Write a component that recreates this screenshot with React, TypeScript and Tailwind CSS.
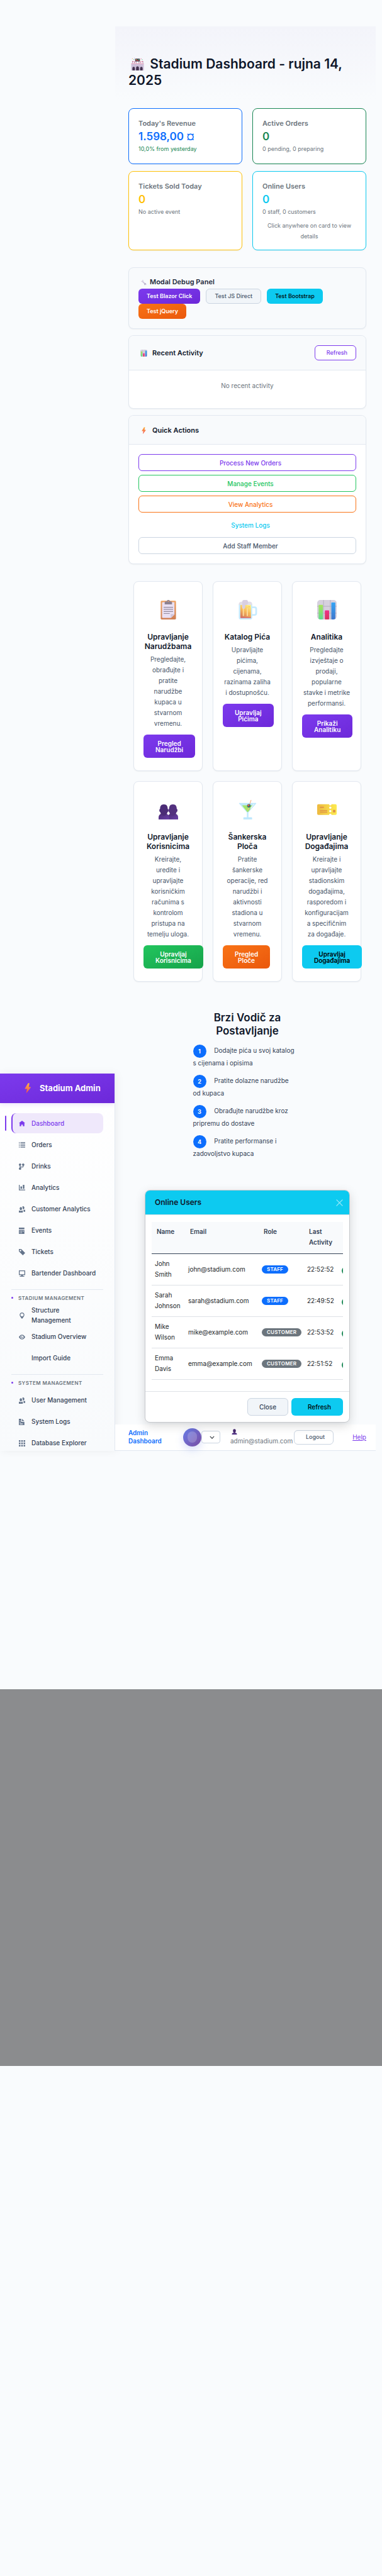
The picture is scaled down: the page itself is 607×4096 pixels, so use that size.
import React from "react";

const OI: Record<string, string> = {
  home: "M4 0l-4 3h1v4h2v-2h2v2h2v-4.03l1 .03-4-3z",
  list: "M0 0v1h1v-1h-1zm2 0v1h6v-1h-6zm-2 2v1h1v-1h-1zm2 0v1h6v-1h-6zm-2 2v1h1v-1h-1zm2 0v1h6v-1h-6zm-2 2v1h1v-1h-1zm2 0v1h6v-1h-6z",
  fork: "M1.5 0c-.83 0-1.5.67-1.5 1.5 0 .66.41 1.2 1 1.41v2.19c-.59.2-1 .75-1 1.41 0 .83.67 1.5 1.5 1.5s1.5-.67 1.5-1.5c0-.6-.34-1.1-.84-1.35.09-.09.21-.16.34-.16h2c.82 0 1.5-.68 1.5-1.5v-.59c.59-.2 1-.75 1-1.41 0-.83-.67-1.5-1.5-1.5s-1.5.67-1.5 1.5c0 .66.41 1.2 1 1.41v.59c0 .28-.22.5-.5.5h-2c-.17 0-.35.04-.5.09v-1.19c.59-.2 1-.75 1-1.41 0-.83-.67-1.5-1.5-1.5z",
  bars: "M0 0v7h8v-1h-7v-6h-1zm5 0v5h2v-5h-2zm-3 2v3h2v-3h-2z",
  people: "M5.5 0c-.51 0-.95.35-1.22.88.45.54.72 1.28.72 2.13 0 .29-.03.55-.09.81.19.11.38.19.59.19.83 0 1.5-.9 1.5-2s-.67-2-1.5-2zm-3 1c-.83 0-1.5.9-1.5 2s.67 2 1.5 2 1.5-.9 1.5-2-.67-2-1.5-2zm4.75 3.16c-.43.51-1.02.82-1.69.84.27.38.44.84.44 1.34v.66h2v-1.66c0-.52-.31-.97-.75-1.19zm-6.5 1c-.44.22-.75.67-.75 1.19v1.66h5v-1.66c0-.52-.31-.97-.75-1.19-.45.53-1.06.84-1.75.84s-1.3-.32-1.75-.84z",
  calendar: "M0 0v2h7v-2h-7zm0 3v4.91c0 .05.04.09.09.09h6.81c.05 0 .09-.04.09-.09v-4.91h-7zm1 1h1v1h-1v-1zm2 0h1v1h-1v-1zm2 0h1v1h-1v-1zm-4 2h1v1h-1v-1zm2 0h1v1h-1v-1z",
  tag: "M0 0v3l5 5 3-3-5-5h-3zm2 1c.55 0 1 .45 1 1s-.45 1-1 1-1-.45-1-1 .45-1 1-1z",
  monitor: "M.34 0a.5.5 0 0 0-.34.5v5a.5.5 0 0 0 .5.5h2.5v1h-1c-.55 0-1 .45-1 1h6c0-.55-.45-1-1-1h-1v-1h2.5a.5.5 0 0 0 .5-.5v-5a.5.5 0 0 0-.5-.5h-7a.5.5 0 0 0-.16 0zm.66 1h6v4h-6v-4z",
  marker: "M4 0c-1.66 0-3 1.34-3 3 0 2 3 5 3 5s3-3 3-5c0-1.66-1.34-3-3-3zm0 1c1.11 0 2 .9 2 2 0 1.11-.89 2-2 2-1.1 0-2-.89-2-2 0-1.1.9-2 2-2z",
  eye: "M4.03 1c-2.53 0-4.03 3-4.03 3s1.5 3 4.03 3c2.47 0 3.97-3 3.97-3s-1.5-3-3.97-3zm-.03 1c1.11 0 2 .9 2 2 0 1.11-.89 2-2 2-1.1 0-2-.89-2-2 0-1.1.9-2 2-2zm0 1c-.55 0-1 .45-1 1s.45 1 1 1 1-.45 1-1c0-.1-.04-.19-.06-.28-.08.16-.24.28-.44.28-.28 0-.5-.22-.5-.5 0-.2.12-.36.28-.44-.09-.03-.18-.06-.28-.06z",
  doc: "M0 0v8h7v-4h-4v-4h-3zm4 0v3h3l-3-3zm-3 2h1v1h-1v-1zm0 2h1v1h-1v-1zm0 2h4v1h-4v-1z",
  grid: "M0 0h2v2h-2zM3 0h2v2h-2zM6 0h2v2h-2zM0 3h2v2h-2zM3 3h2v2h-2zM6 3h2v2h-2zM0 6h2v2h-2zM3 6h2v2h-2zM6 6h2v2h-2z",
};

type ArtProps = { className?: string };

const Stadium = ({ className }: ArtProps) => (
  <svg viewBox="0 0 32 32" className={className} aria-hidden="true">
    <g fill="#e0457b">
      <path d="M3 8l4 1.5L3 11zM8 9l4 1.5L8 12zM22 9l4 1.5-4 1.5zM27 8l4 1.5-4 1.5z" />
    </g>
    <g fill="#8b7f9c">
      <rect x="2.4" y="8" width=".8" height="7" />
      <rect x="7.4" y="9" width=".8" height="6" />
      <rect x="21.6" y="9" width=".8" height="6" />
      <rect x="29.4" y="8" width=".8" height="7" />
      <rect x="12" y="8" width="1" height="7" />
      <rect x="19" y="8" width="1" height="7" />
    </g>
    <rect x="10" y="2" width="12" height="7" rx="1" fill="#453c52" />
    <rect x="11.5" y="3.5" width="3" height="2" fill="#e89b3a" />
    <rect x="17.5" y="3.5" width="3" height="2" fill="#4bb36a" />
    <rect x="13" y="6.2" width="6" height="1.6" fill="#d84f4f" />
    <g>
      <circle cx="3" cy="2" r=".9" fill="#f2a33a" />
      <circle cx="7" cy="4" r=".9" fill="#3aa76d" />
      <circle cx="25" cy="2" r=".9" fill="#e0457b" />
      <circle cx="28" cy="4.5" r=".9" fill="#3aa76d" />
      <circle cx="8" cy="1" r=".7" fill="#6a5acd" />
      <circle cx="24" cy="5.5" r=".7" fill="#f2a33a" />
    </g>
    <path d="M0 14h32v3H0z" fill="#e9dff0" />
    <path d="M0 16h32v16H0z" fill="#cdbfd9" />
    <path d="M0 14h32v1.2H0z" fill="#e07a9b" />
    <g fill="#43324f">
      <path d="M3 32v-6a3.2 3.2 0 0 1 6.4 0v6zM12.4 32v-7a3.6 3.6 0 0 1 7.2 0v7zM22.6 32v-6a3.2 3.2 0 0 1 6.4 0v6z" />
    </g>
  </svg>
);

const Wrench = ({ className }: ArtProps) => (
  <svg viewBox="0 0 32 32" className={className} aria-hidden="true">
    <path d="M10 10L25 25" stroke="#cfc6dc" strokeWidth="6" strokeLinecap="round" />
    <path d="M3 9a7 7 0 0 0 10 5 7 7 0 0 0 2-9 7 7 0 0 0-5-3l2 5-4 4-5-2z" fill="#d8d0e3" />
    <path d="M20 22a6 6 0 0 1 9 0 6 6 0 0 1 1 6l-4-2-3 1 1 4a6 6 0 0 1-4-9z" fill="#bdb2cd" />
  </svg>
);

const Chart = ({ className }: ArtProps) => (
  <svg viewBox="0 0 32 32" className={className} aria-hidden="true">
    <defs>
      <linearGradient id="cg" x1="0" y1="0" x2="0" y2="1"><stop stopColor="#a8e35c" /><stop offset="1" stopColor="#5fdc8e" /></linearGradient>
      <linearGradient id="cr" x1="0" y1="0" x2="0" y2="1"><stop stopColor="#ee3289" /><stop offset="1" stopColor="#d8345c" /></linearGradient>
      <linearGradient id="cb" x1="0" y1="0" x2="0" y2="1"><stop stopColor="#35a5f5" /><stop offset="1" stopColor="#3f76cc" /></linearGradient>
      <clipPath id="cc"><rect width="32" height="32" rx="5" /></clipPath>
    </defs>
    <g clipPath="url(#cc)">
      <rect width="32" height="32" fill="#d6d0de" />
      <path d="M0 10.4h32M0 21.6h32M10.4 0v32M21.6 0v32" stroke="#b5adc0" strokeWidth="1" />
      <rect x="2.4" y="8" width="7" height="24" rx="1" fill="url(#cg)" />
      <rect x="12.6" y="17" width="7" height="15" rx="1" fill="url(#cr)" />
      <rect x="23.2" y="4" width="6.6" height="28" rx="1" fill="url(#cb)" />
    </g>
  </svg>
);

const Bolt = ({ className }: ArtProps) => (
  <svg viewBox="0 0 32 32" className={className} aria-hidden="true">
    <defs>
      <linearGradient id="bo" x1="0" y1="0" x2="0" y2="1"><stop stopColor="#fcb545" /><stop offset="1" stopColor="#f4504e" /></linearGradient>
    </defs>
    <path d="M17 1L7 17.5c-.4.8 0 1.3.9 1.3H14l-2.5 11.5c-.2 1 .9 1.3 1.5.5L25.5 14.5c.5-.8.1-1.5-.8-1.5H19.5L21.5 2c.1-1-.5-1.3-1.2-1.3H18c-.5 0-.8.1-1 .3z" fill="url(#bo)" />
  </svg>
);

const Clipboard = ({ className }: ArtProps) => (
  <svg viewBox="0 0 32 32" className={className} aria-hidden="true">
    <defs>
      <linearGradient id="cl" x1="0" y1="0" x2="0" y2="1"><stop stopColor="#eda261" /><stop offset="1" stopColor="#cf7f55" /></linearGradient>
    </defs>
    <rect x="3.5" y="1.4" width="25" height="30.6" rx="1.5" fill="url(#cl)" />
    <path d="M6.5 3.5h19.5V24l-5.5 5.3H6.500a.8.8 0 0 1-.8-.8V4.300z" fill="#e9e0f3" />
    <path d="M20 29.300v-6h6z" fill="#cdc2d9" />
    <path d="M10 7.300V4.200c0-1 .8-1.800 1.800-1.800h1.700a2.500 2.500 0 0 1 5 0h1.700c1 0 1.800.8 1.800 1.800v3.100z" fill="#8d8291" />
    <circle cx="16" cy="2.3" r=".9" fill="#eda261" />
    <path d="M8.300 12h15.400M8.300 15.400h15.400M8.300 18.900h15.400M8.300 22.200h10" stroke="#958b9d" strokeWidth="1.2" />
  </svg>
);

const Beer = ({ className }: ArtProps) => (
  <svg viewBox="0 0 32 32" className={className} aria-hidden="true">
    <defs>
      <linearGradient id="be" x1=".8" y1="0" x2=".3" y2="1"><stop stopColor="#ffee82" /><stop offset=".5" stopColor="#f8bb5a" /><stop offset="1" stopColor="#d47a5c" /></linearGradient>
    </defs>
    <path d="M23 12h4.500a2.500 2.500 0 0 1 2.500 2.500v7.500a2.500 2.500 0 0 1-2.500 2.500H23" fill="none" stroke="#c6ebff" strokeWidth="2.8" />
    <path d="M1.500 7h22v22a3 3 0 0 1-3 3h-16a3 3 0 0 1-3-3z" fill="#c6ebff" />
    <path d="M4 8h17.500v20.500a1.300 1.300 0 0 1-1.300 1.300H5.300A1.300 1.300 0 0 1 4 28.500z" fill="url(#be)" />
    <path d="M4 29h17.500" stroke="#d56d82" strokeWidth="1.2" />
    <path d="M9 14v11.500M15.500 14v11.500" stroke="#fbd99a" strokeWidth="2" strokeLinecap="round" />
    <path d="M1.500 8V6.500A4 4 0 0 1 6.500 3 5.500 5.500 0 0 1 17 3a4.500 4.500 0 0 1 6.500 4v1h-12v4a2.300 2.300 0 0 1-4.600 0V8z" fill="#e3dfe8" />
    <path d="M7 4.500a5 5 0 0 1 10 0C17 7 15 8 12 8.500V12a2.300 2.300 0 0 1-4.600 0z" fill="#d9cfe2" />
    <circle cx="18.5" cy="11" r=".7" fill="#e7a14c" />
    <circle cx="18.5" cy="21.5" r=".7" fill="#e7a14c" />
  </svg>
);

const Person = ({ className }: ArtProps) => (
  <svg viewBox="0 0 32 32" className={className} aria-hidden="true">
    <path d="M2 32v-3c0-4 4-6.500 9-7h10c5 .5 9 3 9 7v3z" fill="#4f2f82" />
    <path d="M16 1c-5 0-7.500 3-7.500 8-1.500 0-1.500 4 0 4.300C9 19 12 23 16 23s7-4 7.500-9.700c1.500-.3 1.500-4.300 0-4.300C23.500 4 21 1 16 1z" fill="#46296f" />
  </svg>
);

const People = ({ className }: ArtProps) => (
  <svg viewBox="0 0 32 32" className={className} aria-hidden="true">
    <defs>
      <linearGradient id="pp" x1="0" y1="0" x2="1" y2="1"><stop stopColor="#4a2b74" /><stop offset="1" stopColor="#6a3fa8" /></linearGradient>
    </defs>
    <path d="M15 32v-3.500c0-4 3-6 6.500-6.500h4c3.800.5 6.500 2.700 6.500 6.500V32z" fill="url(#pp)" />
    <path d="M23.500 7.200c-4.500 0-6.300 2.800-6.300 7.500-1.700 0-1.500 5 .3 5 .6 3.500 3 6 6 6s5.400-2.500 6-6c1.800 0 2-5 .3-5 0-4.700-1.800-7.500-6.300-7.500z" fill="#53317f" />
    <path d="M0 32v-3.500C0 24.500 3 22.500 6.500 22h4c3.800.5 6.500 2.700 6.500 6.500V32z" fill="url(#pp)" />
    <path d="M8.700 7.200c-4.500 0-6.300 2.800-6.300 7.500-1.700 0-1.500 5 .3 5 .6 3.500 3 6 6 6s5.400-2.500 6-6c1.800 0 2-5 .3-5 0-4.700-1.800-7.500-6.300-7.500z" fill="#4b2c76" />
  </svg>
);

const Martini = ({ className }: ArtProps) => (
  <svg viewBox="0 0 32 32" className={className} aria-hidden="true">
    <path d="M2.500 5h27c.6 0 .8.500.5 1L17.300 20.500V28.500H22c.8 0 1.300.500 1.300 1.200V32H9v-2.300c0-.7.5-1.200 1.300-1.200h4.500V20.500L2 6c-.4-.5-.1-1 .5-1z" fill="#bfe8fd" />
    <path d="M6.800 8.800h18.500L16.800 19.500a1 1 0 0 1-1.500 0z" fill="#a3e56c" />
    <path d="M21.500.5l-5 15.500" stroke="#f5b58c" strokeWidth="1.2" strokeLinecap="round" />
    <circle cx="18" cy="9.5" r="2.9" fill="#3d6f7d" />
    <circle cx="17.4" cy="8.9" r="1.5" fill="#f0603f" />
    <path d="M26 7l-5 6.500" stroke="#eaf8ff" strokeWidth="1.3" strokeLinecap="round" />
  </svg>
);

const Ticket = ({ className }: ArtProps) => (
  <svg viewBox="0 0 32 32" className={className} aria-hidden="true">
    <defs>
      <linearGradient id="ti" x1="0" y1="0" x2="1" y2="0"><stop stopColor="#edb93f" /><stop offset="1" stopColor="#fdeb50" /></linearGradient>
    </defs>
    <path d="M2 7h17.500a2 2 0 0 0 4 0H30a2 2 0 0 1 2 2v13.500a2 2 0 0 1-2 2h-6.500a2 2 0 0 0-4 0H2a2 2 0 0 1-2-2V9a2 2 0 0 1 2-2z" fill="url(#ti)" />
    <circle cx="21.5" cy="12.6" r="1.8" fill="#fff" />
    <circle cx="21.5" cy="18.3" r="1.8" fill="#fff" />
    <path d="M4.500 11h6.500v1.800H4.500zM4.500 16.800h12v1.300h-12zM4.500 19.300h12v1.300h-12zM26 16.300h3.800v4H26z" fill="#dd8f47" />
  </svg>
);

const nav1: [string, string][] = [
  ["home", "Dashboard"],
  ["list", "Orders"],
  ["fork", "Drinks"],
  ["bars", "Analytics"],
  ["people", "Customer Analytics"],
  ["calendar", "Events"],
  ["tag", "Tickets"],
  ["monitor", "Bartender Dashboard"],
];
const nav2: [string, string][] = [
  ["marker", "Structure\nManagement"],
  ["eye", "Stadium Overview"],
  ["", "Import Guide"],
];
const nav3: [string, string][] = [
  ["people", "User Management"],
  ["doc", "System Logs"],
  ["grid", "Database Explorer"],
];

function NavItem({ icon, label, active }: { icon: string; label: string; active?: boolean }) {
  return (
    <li className="relative">
      {active && <span className="absolute -left-[10px] top-1 h-6 w-[2px] rounded bg-[#7c3aed]" />}
      <a
        href="#"
        className={
          "flex h-8 items-center gap-[10px] rounded-lg border-l-2 pl-[10px] text-[10px] leading-4 font-medium " +
          (active ? "border-[#7c3aed] bg-[#efe8fb] text-[#7c3aed]" : "border-transparent text-[#334155]")
        }
      >
        <svg viewBox="0 0 8 8" className={"mt-[2px] size-[10px] shrink-0 " + (active ? "fill-[#7c3aed]" : "fill-[#64748b]")} aria-hidden="true">
          <path d={OI[icon] || ""} />
        </svg>
        <span className="whitespace-pre">{label}</span>
      </a>
    </li>
  );
}

function NavGroup({ title, items }: { title: string; items: [string, string][] }) {
  return (
    <div className="mt-[10px] border-t border-[#e2e8f0] pt-2">
      <h2 className="flex items-center gap-2 text-[8px] leading-[10px] font-semibold tracking-wider text-[#6c757d] uppercase">
        <span className="size-[3px] rounded-full bg-[#7c3aed]" />
        {title}
      </h2>
      <ul className="mt-[6px] flex flex-col gap-[2px]">
        {items.map(([i, l]) => (
          <NavItem key={l} icon={i} label={l} />
        ))}
      </ul>
    </div>
  );
}

const card = "rounded-lg border border-[#e2e8f0] shadow-xs";

function Stat(props: { title: string; value: string; sub: string; border: string; color: string; subColor?: string; note?: string }) {
  return (
    <section className={"rounded-lg border bg-white px-[15px] pt-4 pb-[13px] shadow-xs " + props.border}>
      <h2 className="text-[11px] leading-[14px] font-semibold text-[#6c757d]">{props.title}</h2>
      <p className={"mt-1 text-[17px] leading-[20px] font-semibold " + props.color}>{props.value}</p>
      <p className={"text-[9px] leading-[20px] " + (props.subColor || "text-[#6c757d]")}>{props.sub}</p>
      {props.note && <p className="mt-[3px] text-center text-[9px] leading-[17px] text-[#6c757d]">{props.note}</p>}
    </section>
  );
}

const purple = "bg-linear-to-br from-[#7c3aed] to-[#6d28d9] text-white";
const green = "bg-linear-to-br from-[#22c55e] to-[#16a34a] text-white";
const orange = "bg-linear-to-br from-[#f97316] to-[#ea580c] text-white";
const cyan = "bg-[#0dcaf0] text-black";

const features = [
  { art: Clipboard, title: "Upravljanje Narudžbama", text: "Pregledajte,\nobrađujte i\npratite\nnarudžbe\nkupaca u\nstvarnom\nvremenu.", btn: "Pregled Narudžbi", tone: purple },
  { art: Beer, title: "Katalog Pića", text: "Upravljajte\npićima,\ncijenama,\nrazinama zaliha\ni dostupnošću.", btn: "Upravljaj Pićima", tone: purple },
  { art: Chart, title: "Analitika", text: "Pregledajte\nizvještaje o\nprodaji,\npopularne\nstavke i metrike\nperformansi.", btn: "Prikaži Analitiku", tone: purple },
  { art: People, title: "Upravljanje Korisnicima", text: "Kreirajte,\nuredite i\nupravljajte\nkorisničkim\nračunima s\nkontrolom\npristupa na\ntemelju uloga.", btn: "Upravljaj Korisnicima", tone: green },
  { art: Martini, title: "Šankerska Ploča", text: "Pratite\nšankerske\noperacije, red\nnarudžbi i\naktivnosti\nstadiona u\nstvarnom\nvremenu.", btn: "Pregled Ploče", tone: orange },
  { art: Ticket, title: "Upravljanje Događajima", text: "Kreirajte i\nupravljajte\nstadionskim\ndogađajima,\nrasporedom i\nkonfiguracijam\na specifičnim\nza događaje.", btn: "Upravljaj Događajima", tone: cyan },
];

const actions: [string, string][] = [
  ["Process New Orders", "border-[#7c3aed] text-[#7c3aed]"],
  ["Manage Events", "border-[#22c55e] text-[#22c55e]"],
  ["View Analytics", "border-[#f97316] text-[#f97316]"],
  ["System Logs", "border-transparent text-[#0dcaf0]"],
  ["Add Staff Member", "border-[#cbd5e1] text-[#475569]"],
];

const steps: [string, string][] = [
  ["Dodajte pića u svoj katalog", "s cijenama i opisima"],
  ["Pratite dolazne narudžbe", "od kupaca"],
  ["Obrađujte narudžbe kroz", "pripremu do dostave"],
  ["Pratite performanse i", "zadovoljstvo kupaca"],
];

const users = [
  ["John Smith", "john@stadium.com", "Staff", "22:52:52"],
  ["Sarah Johnson", "sarah@stadium.com", "Staff", "22:49:52"],
  ["Mike Wilson", "mike@example.com", "Customer", "22:53:52"],
  ["Emma Davis", "emma@example.com", "Customer", "22:51:52"],
];

const small = "h-6 rounded-md px-[13px] text-[9px] leading-3";

export default function App() {
  return (
    <div className="min-h-screen bg-[#f9fbfd] font-['Inter',sans-serif] text-[#1e293b]">
      <div className="flex items-end">
        <aside className="h-[600px] w-[183px] shrink-0 overflow-hidden border-r border-[#e2e8f0] bg-linear-to-b from-white to-[#f8fafc] shadow-[2px_0_13px_rgba(0,0,0,0.06)]">
          <div className="flex h-[47px] items-center gap-[11px] bg-linear-to-br from-[#7c3aed] to-[#6d28d9] pl-9 text-white shadow-[0_2px_7px_rgba(124,58,237,0.15)]">
            <Bolt className="size-4" />
            <span className="text-[13px] leading-5 font-bold">Stadium Admin</span>
          </div>
          <nav className="pt-4 pr-[18px] pl-[18px]">
            <ul className="flex flex-col gap-[2px]">
              {nav1.map(([i, l]) => (
                <NavItem key={l} icon={i} label={l} active={i === "home"} />
              ))}
            </ul>
            <NavGroup title="Stadium Management" items={nav2} />
            <NavGroup title="System Management" items={nav3} />
          </nav>
        </aside>

        <div className="mr-[10px] min-w-0 flex-1 pt-[42px]">
          <main>
            <header className="bg-linear-to-b from-[#f3f4fa] to-[#f9fbfd] pt-[47px] pr-[15px] pb-[19px] pl-[21px]">
              <h1 className="text-[21px] leading-[26px] font-semibold text-[#0f172a]">
                <Stadium className="mx-1 inline-block h-5 w-[21px] align-[-3px]" /> Stadium Dashboard - rujna 14, 2025
              </h1>
            </header>

            <div className="pt-3 pr-[15px] pl-[21px]">
              <div className="grid grid-cols-2 gap-x-4 gap-y-[11px]">
                <Stat title="Today's Revenue" value="1.598,00 ¤" sub="10,0% from yesterday" border="border-[#0d6efd]" color="text-[#0d6efd]" subColor="text-[#198754]" />
                <Stat title="Active Orders" value="0" sub="0 pending, 0 preparing" border="border-[#198754]" color="text-[#198754]" />
                <Stat title="Tickets Sold Today" value="0" sub="No active event" border="border-[#ffc107]" color="text-[#ffc107]" />
                <Stat title="Online Users" value="0" sub="0 staff, 0 customers" border="border-[#0dcaf0]" color="text-[#0dcaf0]" note="Click anywhere on card to view details" />
              </div>

              <section className={"mt-[27px] bg-[#f8fafc] px-[15px] pt-4 pb-[15px] " + card}>
                <h2 className="flex items-center gap-[5px] pl-[3px] text-[11px] leading-[13px] font-semibold">
                  <Wrench className="size-[10px]" /> Modal Debug Panel
                </h2>
                <div className="mt-1 flex flex-wrap gap-x-[9px]">
                  <button className={small + " font-semibold " + purple}>Test Blazor Click</button>
                  <button className={small + " border border-[#cbd5e1] bg-[#f1f5f9] font-medium text-[#475569]"}>Test JS Direct</button>
                  <button className={small + " font-medium " + cyan}>Test Bootstrap</button>
                  <button className={small + " font-semibold " + orange}>Test jQuery</button>
                </div>
              </section>

              <section className={"mt-[10px] overflow-hidden bg-white " + card}>
                <div className="flex items-center justify-between border-b border-[#e2e8f0] bg-[#f8fafc] px-[15px] py-[15px]">
                  <h2 className="flex items-center gap-2 pl-[3px] text-[11px] leading-4 font-semibold text-[#0f172a]">
                    <Chart className="size-[11px]" /> Recent Activity
                  </h2>
                  <button className="h-6 rounded-md border border-[#7c3aed] bg-white pr-[13px] pl-[18px] text-[9px] leading-3 font-medium text-[#7c3aed]">Refresh</button>
                </div>
                <p className="pt-4 pb-7 text-center text-[10px] leading-4 text-[#6c757d]">No recent activity</p>
              </section>

              <section className={"mt-[10px] overflow-hidden bg-white " + card}>
                <div className="border-b border-[#e2e8f0] bg-[#f8fafc] px-[15px] pt-[15px] pb-[14px]">
                  <h2 className="flex items-center gap-2 pl-[3px] text-[11px] leading-4 font-semibold text-[#0f172a]">
                    <Bolt className="size-[11px]" /> Quick Actions
                  </h2>
                </div>
                <div className="flex flex-col gap-[6px] px-[15px] pt-[15px] pb-[15px]">
                  {actions.map(([l, c]) => (
                    <button key={l} className={"h-[27px] rounded-md border bg-white pl-[10px] text-[10px] leading-4 font-medium " + c}>
                      {l}
                    </button>
                  ))}
                </div>
              </section>

              <div className="mx-2 mt-[27px] grid grid-cols-3 gap-4">
                {features.map(({ art: Art, title, text, btn, tone }) => (
                  <section key={title} className={"min-w-0 bg-white px-[15px] pt-[29px] pb-5 text-center " + card}>
                    <Art className="mx-auto size-[31px]" />
                    <h3 className="mt-5 text-[12px] leading-[15px] font-semibold text-[#0f172a]">{title}</h3>
                    <p className="mt-[5px] text-[10px] leading-[17px] whitespace-pre-line text-[#475569]">{text}</p>
                    <button className={"mt-[9px] flex h-[37px] w-min items-center rounded-md px-[19px] text-[10px] leading-[10px] font-semibold " + tone}>{btn}</button>
                  </section>
                ))}
              </div>

              <section className="mt-[47px]">
                <h2 className="mx-auto max-w-[172px] text-center text-[17px] leading-[21px] font-semibold text-[#0f172a]">Brzi Vodič za Postavljanje</h2>
                <ol className="mx-auto mt-[11px] flex w-[173px] flex-col gap-[6px] text-[10px] leading-[17px] text-[#334155]">
                  {steps.map(([a, b], i) => (
                    <li key={a} className="h-[42px]">
                      <span className="mr-[10px] inline-flex size-[21px] items-center justify-center rounded-full bg-[#0d6efd] align-middle text-[9px] leading-none font-bold text-white">{i + 1}</span>{" "}
                      {a}
                      <br />
                      {b}
                    </li>
                  ))}
                </ol>
              </section>
            </div>
          </main>

          <section role="dialog" aria-labelledby="users-title" className="relative mx-auto mt-[45px] mr-[41px] ml-[47px] overflow-hidden rounded-lg border border-[#c5c8cc] bg-white shadow-[0_5px_16px_rgba(0,0,0,0.15)]">
            <div className="flex h-[39px] items-center justify-between border-b border-[#dee2e6] bg-[#0dcaf0] pr-[10px] pl-[15px]">
              <h2 id="users-title" className="text-[12px] leading-4 font-semibold text-[#0f172a]">Online Users</h2>
              <button aria-label="Close dialog" className="text-white/60">
                <svg viewBox="0 0 12 12" className="size-[11px]" aria-hidden="true">
                  <path d="M1 1l10 10M11 1L1 11" stroke="currentColor" strokeWidth="1.3" strokeLinecap="round" />
                </svg>
              </button>
            </div>
            <div className="overflow-hidden px-[10px] pt-[11px] pb-[18px]">
              <div className="overflow-hidden">
                <table className="w-[364px] table-fixed border-collapse text-left text-[10px] leading-[17px]">
                  <colgroup>
                    <col className="w-[53px]" />
                    <col className="w-[117px]" />
                    <col className="w-[72px]" />
                    <col className="w-[55px]" />
                    <col className="w-[67px]" />
                  </colgroup>
                  <thead>
                    <tr className="h-[50px] border-b border-[#334155] bg-[#f8fafc] align-top font-semibold text-[#334155]">
                      <th scope="col" className="pt-[7px] pl-2 font-semibold">Name</th>
                      <th scope="col" className="pt-[7px] pl-2 font-semibold">Email</th>
                      <th scope="col" className="pt-[7px] pl-2 font-semibold">Role</th>
                      <th scope="col" className="pt-[7px] pl-2 font-semibold">Last Activity</th>
                      <th scope="col" aria-label="Status" />
                    </tr>
                  </thead>
                  <tbody>
                    {users.map(([n, e, r, t]) => (
                      <tr key={e} className="h-[50px] border-b border-[#dee2e6] text-[#212529]">
                        <td className="pr-2 pl-[5px]">{n}</td>
                        <td className="pl-[5px]">{e}</td>
                        <td className="pl-[5px]">
                          <span className={"inline-block rounded-full px-2 align-middle text-[8px] leading-[13px] font-semibold tracking-wide text-white uppercase " + (r === "Staff" ? "bg-[#0d6efd]" : "bg-[#6c757d]")}>{r}</span>
                        </td>
                        <td className="pl-[5px]">{t}</td>
                        <td className="pt-1 pl-[5px]">
                          <span role="img" aria-label="Online" className="block h-[13px] w-11 rounded-full bg-[#198754]" />
                        </td>
                      </tr>
                    ))}
                  </tbody>
                </table>
              </div>
            </div>
            <div className="flex justify-end gap-[5px] border-t border-[#dee2e6] p-[10px]">
              <button className="h-7 rounded-md border border-[#cbd5e1] bg-[#f1f5f9] px-[18px] text-[10px] leading-4 font-medium text-[#334155]">Close</button>
              <button className="h-7 rounded-md bg-[#0dcaf0] pr-[19px] pl-[26px] text-[10px] leading-4 font-medium text-black">Refresh</button>
            </div>
          </section>

          <div className="mt-[3px] flex h-[42px] items-center border-b border-[#e2e8f0] bg-white pr-[15px] pl-[21px]">
            <a href="#" className="w-[87px] shrink-0 text-[10px] leading-[13px] font-semibold text-[#0d6efd]">
              Admin
              <br />
              Dashboard
            </a>
            <button aria-label="Theme" className="flex size-[29px] shrink-0 items-center justify-center rounded-full bg-linear-to-br from-[#667eea] to-[#764ba2] shadow-[0_5px_13px_rgba(102,126,234,0.25)]">
              <span className="h-[18px] w-[15px] rounded-full bg-white/20" />
            </button>
            <button aria-label="Theme options" className="flex h-5 w-[30px] shrink-0 items-center justify-center rounded-sm border border-[#cbd5e1] bg-white pl-[3px]">
              <svg viewBox="0 0 10 6" className="h-[5px] w-2" aria-hidden="true">
                <path d="M1 1l4 4 4-4" fill="none" stroke="#343a40" strokeWidth="1.4" />
              </svg>
            </button>
            <div className="ml-4 flex w-[91px] shrink-0 flex-col text-[10px] leading-[17px] text-[#6c757d]">
              <Person className="mt-[2px] mb-[2px] ml-[2px] size-[9px]" />
              <span>admin@stadium.com</span>
            </div>
            <button className="ml-[10px] h-[23px] shrink-0 rounded-md border border-[#cbd5e1] bg-white pr-[13px] pl-[18px] text-[9px] leading-4 font-medium text-[#475569]">Logout</button>
            <a href="#" className="ml-auto text-[10px] leading-4 text-[#7c3aed] underline">Help</a>
          </div>
        </div>
      </div>

      <div className="pt-[379px] pb-[812px]">
        <div className="h-[599px] bg-[#8b8c8e]" />
      </div>
    </div>
  );
}
